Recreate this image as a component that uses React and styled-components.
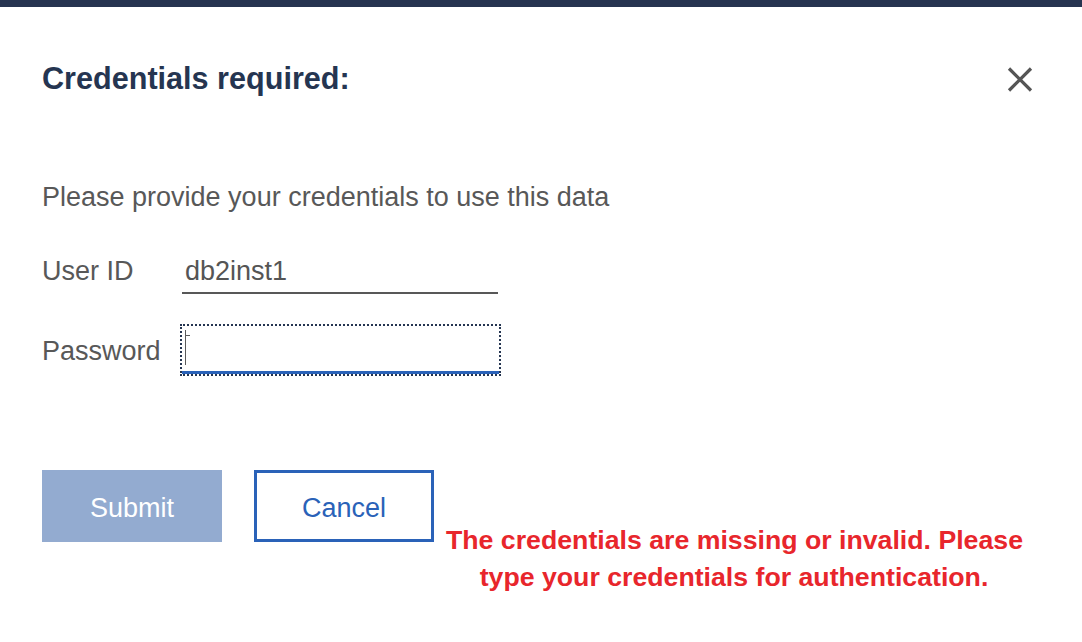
import React from "react";
import styled, { createGlobalStyle } from "styled-components";

const GlobalStyle = createGlobalStyle`
  html, body {
    margin: 0;
    padding: 0;
    background: #ffffff;
  }
  body {
    font-family: "Liberation Sans", Arial, Helvetica, sans-serif;
  }
  * { box-sizing: border-box; }
`;

const Page = styled.div`
  width: 1082px;
  height: 642px;
  background: #ffffff;
  overflow: hidden;
  display: flex;
  flex-direction: column;
`;

const TopBar = styled.div`
  height: 7px;
  background: #263450;
  flex: none;
`;

const Dialog = styled.div`
  display: flex;
  flex-direction: column;
  padding: 53px 49px 0 42px;
`;

const Header = styled.div`
  display: flex;
  justify-content: space-between;
  align-items: center;
`;

const Title = styled.h2`
  margin: 0;
  font-size: 30.6px;
  line-height: 36px;
  font-weight: 700;
  color: #253551;
`;

const CloseButton = styled.button`
  border: 0;
  background: none;
  padding: 0;
  margin-top: 3px;
  width: 26px;
  height: 27px;
  display: flex;
  cursor: pointer;
`;

const Description = styled.p`
  margin: 85px 0 0;
  font-size: 27px;
  line-height: 32px;
  color: #585858;
`;

const Form = styled.div`
  display: flex;
  flex-direction: column;
  gap: 32px;
  margin-top: 33px;
`;

const Row = styled.div`
  display: flex;
  align-items: center;
  height: 48px;
`;

const Label = styled.label`
  width: 140px;
  flex: none;
  padding-top: 2px;
  font-size: 27px;
  line-height: 32px;
  color: #585858;
`;

const TextInput = styled.input`
  width: 316px;
  height: 48px;
  border: 0;
  border-bottom: 2px solid #585858;
  padding: 4px 0 0 3px;
  margin: 0;
  font-family: inherit;
  font-size: 27px;
  color: #555555;
  background: transparent;
  outline: none;
`;

const FocusedField = styled.div`
  width: 317px;
  height: 48px;
  border-bottom: 3px solid #2a62b8;
  outline: 2px dotted #253551;
  outline-offset: 0;
  display: flex;
  align-items: flex-start;
  padding: 4px 0 0 3px;
`;

const Caret = styled.span`
  position: relative;
  width: 1px;
  height: 35px;
  background: #5a5a5a;
  &::after {
    content: "";
    position: absolute;
    left: 0;
    top: 5px;
    width: 5px;
    height: 1px;
    background: #5a5a5a;
  }
`;

const Actions = styled.div`
  display: flex;
  align-items: flex-start;
  margin-top: 96px;
`;

const Button = styled.button`
  width: 180px;
  height: 72px;
  flex: none;
  margin: 0 ${(p) => (p.$primary ? "32px" : "0")} 0 0;
  padding: 5px 0 0;
  font-family: inherit;
  font-size: 27px;
  background: ${(p) => (p.$primary ? "#93abd0" : "#ffffff")};
  color: ${(p) => (p.$primary ? "#ffffff" : "#2a62b8")};
  border: ${(p) => (p.$primary ? "0" : "3px solid #2a62b8")};
  cursor: pointer;
`;

const ErrorText = styled.div`
  width: 576px;
  margin: 52px 0 0 12px;
  text-align: center;
  font-size: 26.7px;
  line-height: 37px;
  font-weight: 700;
  color: #e8262c;
`;

const ErrorLine = styled.span`
  display: block;
  white-space: nowrap;
`;

const CloseIcon = () => (
  <svg width="26" height="27" viewBox="0 0 26 27" fill="none">
    <path d="M2 2.5 L24 24.5 M24 2.5 L2 24.5" stroke="#555555" strokeWidth="3.2" />
  </svg>
);

export default function App() {
  return (
    <>
      <GlobalStyle />
      <Page>
        <TopBar />
        <Dialog>
          <Header>
            <Title>Credentials required:</Title>
            <CloseButton aria-label="Close">
              <CloseIcon />
            </CloseButton>
          </Header>
          <Description>Please provide your credentials to use this data</Description>
          <Form>
            <Row>
              <Label>User ID</Label>
              <TextInput defaultValue="db2inst1" />
            </Row>
            <Row>
              <Label>Password</Label>
              <FocusedField>
                <Caret />
              </FocusedField>
            </Row>
          </Form>
          <Actions>
            <Button $primary>Submit</Button>
            <Button>Cancel</Button>
            <ErrorText>
              <ErrorLine>The credentials are missing or invalid. Please</ErrorLine>
              <ErrorLine>type your credentials for authentication.</ErrorLine>
            </ErrorText>
          </Actions>
        </Dialog>
      </Page>
    </>
  );
}
